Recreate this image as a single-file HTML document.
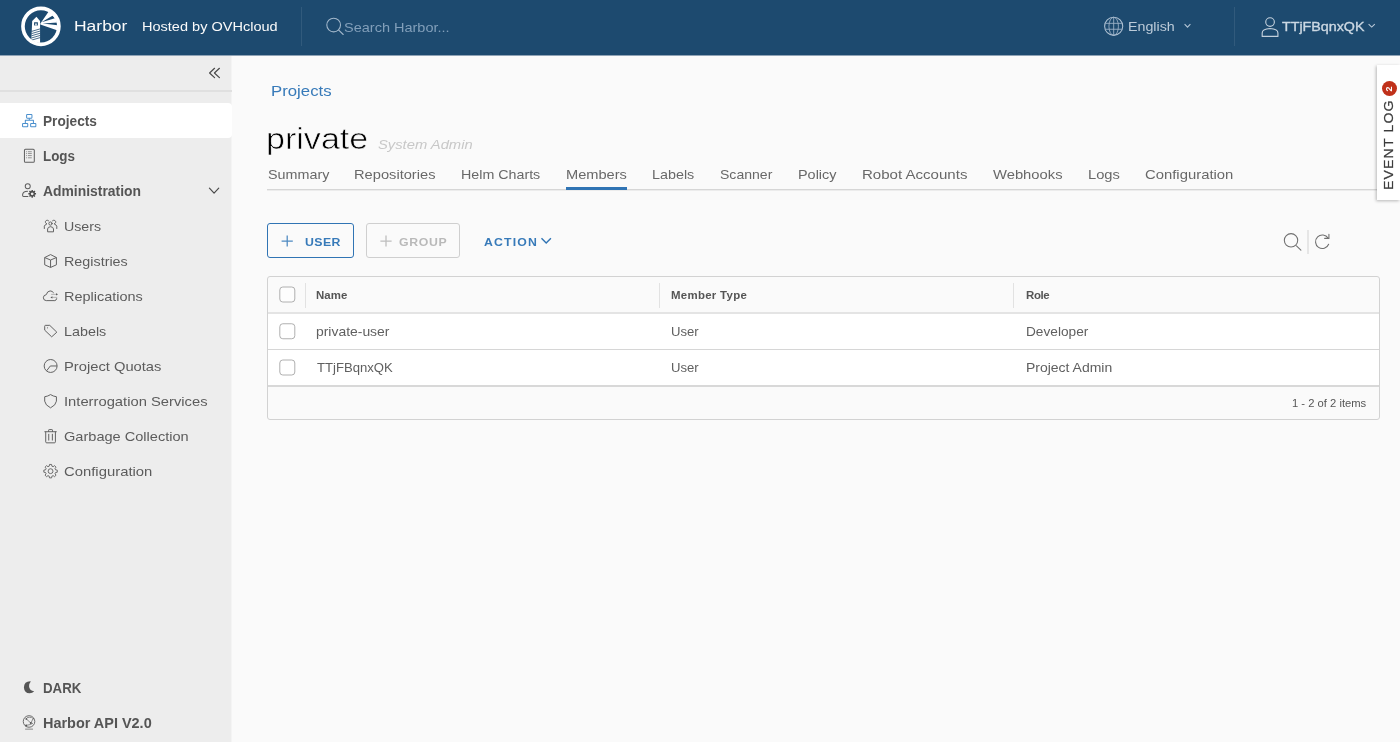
<!DOCTYPE html>
<html lang="en">
<head>
<meta charset="utf-8">
<title>Harbor - private - Members</title>
<style>
*{box-sizing:border-box;margin:0;padding:0}
html,body{width:1400px;height:742px;overflow:hidden;background:#fafafa}
body{position:relative;font-family:"Liberation Sans",sans-serif;color:#565656}
.t{position:absolute;white-space:nowrap;line-height:1;transform-origin:0 0;font-family:"Liberation Sans",sans-serif;text-decoration:none;font-weight:400}
ul{list-style:none}
svg{position:absolute;overflow:visible}
main,header,nav.side,aside.evt{will-change:transform}
main{position:absolute;left:0;top:0;width:1400px;height:742px;background:#fafafa;z-index:0}
nav.side{position:absolute;left:0;top:0;width:232px;height:742px;background:#ededed;border-right:1px solid #f4f4f4;z-index:1}
header{position:absolute;left:0;top:0;width:1400px;height:56px;background:#1d4a6f;border-bottom:1px solid #8fa3b6;z-index:2}
.hdiv{position:absolute;top:7px;width:1px;height:39px;background:#315a7c}
.navline{position:absolute;left:0;top:90px;width:232px;height:2px;background:#e0e0e0}
.navactive{position:absolute;left:0;top:103px;width:232px;height:35px;background:#ffffff;border-radius:0 4px 4px 0}
.tabline{position:absolute;left:267px;top:189px;width:1112px;height:2px;background:#d6d6d6;border-bottom:1px solid #ececec}
.tabactive{position:absolute;left:566px;top:187px;width:61px;height:3px;background:#3074b4}
.btn{position:absolute;top:223px;height:35px;border:1px solid #3074b4;border-radius:3px;background:transparent;padding:0;margin:0;overflow:visible}
.btn.link{border-color:transparent}
.btn.dis{border-color:#cfcfcf}
.grid{position:absolute;left:267px;top:276px;width:1113px;height:144px;border:1px solid #d2d2d2;border-radius:3px;background:#fafafa}
.row{position:absolute;left:268px;width:1111px;background:#ffffff}
.hline{position:absolute;left:268px;width:1111px;height:1px;background:#d4d4d4}
.colsep{position:absolute;top:283px;width:1px;height:25px;background:#e2e2e2}
.tsep{position:absolute;left:1307px;top:230px;width:2px;height:24px;background:#e6e6e6}
aside.evt{position:absolute;left:1377px;top:65px;width:23px;height:135px;background:#ffffff;box-shadow:-1px 1px 3px rgba(0,0,0,.27);z-index:3}
aside.evt .rot{position:absolute;left:0;top:135px;width:135px;height:24px;transform-origin:0 0;transform:rotate(-90deg)}
aside.evt .badge{position:absolute;left:103.5px;top:5px;width:15px;height:15px;border-radius:50%;background:#c0311a;color:#fff;font-size:9px;font-weight:700;line-height:15px;text-align:center}
</style>
</head>
<body>

<header>
  <svg style="left:14px;top:0;width:54px;height:54px" viewBox="0 0 742 742">
    <defs><clipPath id="lc"><circle cx="370" cy="362" r="228"/></clipPath></defs>
    <g clip-path="url(#lc)">
      <polygon points="362,322 482,150 760,80 760,480 590,416 362,338" fill="#fff"/>
      <polygon points="378,305 528,215 562,252" fill="#1d4a6f"/>
      <polygon points="395,323 600,308 600,347" fill="#1d4a6f"/>
      <polygon points="308,230 358,288 358,600 236,600 250,288" fill="#fff"/>
      <rect x="276" y="306" width="52" height="44" fill="#1d4a6f"/>
      <rect x="292" y="322" width="20" height="28" fill="#fff"/>
      <g stroke="#1d4a6f" stroke-width="11">
        <line x1="240" y1="432" x2="362" y2="396"/>
        <line x1="240" y1="462" x2="362" y2="426"/>
        <line x1="240" y1="492" x2="362" y2="456"/>
        <line x1="240" y1="522" x2="362" y2="486"/>
        <line x1="240" y1="552" x2="362" y2="516"/>
      </g>
    </g>
    <circle cx="370" cy="362" r="247" fill="none" stroke="#fff" stroke-width="50"/>
  </svg>
  <span class="t" style="left:74.26px;top:18px;font-size:15.4px;color:#fafafa;transform:scaleX(1.135);">Harbor</span>
  <span class="t" style="left:141.99px;top:21px;font-size:12.8px;color:#fafafa;transform:scaleX(1.135);">Hosted by OVHcloud</span>
  <div class="hdiv" style="left:301px"></div>
  <svg style="left:315px;top:7px;width:40px;height:40px" viewBox="0 0 742 742" fill="none" stroke="#a3b8cb" stroke-width="20" stroke-linecap="round">
    <circle cx="346" cy="335" r="127"/><line x1="440" y1="428" x2="524" y2="510"/>
  </svg>
  <span class="t" style="left:344.09px;top:21px;font-size:13.3px;color:#829fba;transform:scaleX(1.091);">Search Harbor...</span>
  <svg style="left:1094px;top:7px;width:40px;height:40px" viewBox="0 0 742 742" fill="none" stroke="#b0c2d3" stroke-width="20">
    <circle cx="365" cy="358" r="168"/>
    <g stroke-width="16" stroke="#9fb5c9">
    <ellipse cx="365" cy="358" rx="88" ry="168"/>
    <line x1="365" y1="190" x2="365" y2="526"/>
    <line x1="212" y1="303" x2="518" y2="303"/>
    <line x1="212" y1="413" x2="518" y2="413"/>
    </g>
  </svg>
  <span class="t" style="left:1128.12px;top:20px;font-size:13.4px;color:#bccbd9;transform:scaleX(1.064);">English</span>
  <svg style="left:1183px;top:21px;width:9px;height:9px" viewBox="0 0 9 9" fill="none" stroke="#b4c6d6" stroke-width="1.1"><polyline points="1.6,3.2 4.5,6.1 7.4,3.2"/></svg>
  <div class="hdiv" style="left:1234px"></div>
  <svg style="left:1250px;top:7px;width:40px;height:40px" viewBox="0 0 742 742" fill="none" stroke="#c3d0dc" stroke-width="21" stroke-linejoin="round">
    <circle cx="372" cy="280" r="80"/>
    <path d="M226 545 L226 482 Q226 405 372 398 Q518 405 518 482 L518 545 Z"/>
  </svg>
  <span class="t" style="left:1282.17px;top:20px;font-size:13.3px;color:#ccd8e3;transform:scaleX(1.073);-webkit-text-stroke:0.35px #ccd8e3;">TTjFBqnxQK</span>
  <svg style="left:1367px;top:21px;width:9px;height:9px" viewBox="0 0 9 9" fill="none" stroke="#b9c9d8" stroke-width="1.1"><polyline points="1.6,3.2 4.7,6.1 7.8,3.2"/></svg>
</header>

<nav class="side">
  <svg style="left:199px;top:58px;width:30px;height:30px" viewBox="0 0 742 742" fill="none" stroke="#4a4a4a" stroke-width="30" stroke-linecap="round" stroke-linejoin="round">
    <polyline points="385,255 262,370 385,485"/><polyline points="505,255 382,370 505,485"/>
  </svg>
  <div class="navline"></div>
  <ul>
    <li><div class="navactive"></div>
      <svg style="left:14px;top:105px;width:30px;height:30px" viewBox="0 0 742 742" fill="none" stroke="#4a8fcd" stroke-width="25" stroke-linejoin="round">
        <rect x="312" y="237" width="132" height="88" rx="14"/>
        <path d="M378 325 V380 M280 445 V380 H480 V445"/>
        <rect x="212" y="457" width="128" height="78" rx="12"/>
        <rect x="412" y="457" width="128" height="78" rx="12"/>
      </svg>
      <span class="t" style="left:42.7px;top:114px;font-size:14px;color:#555555;transform:scaleX(0.977);font-weight:700;">Projects</span></li>
    <li>
      <svg style="left:14px;top:140px;width:30px;height:30px" viewBox="0 0 742 742" fill="none" stroke="#5e5e5e" stroke-width="25">
        <rect x="258" y="228" width="244" height="325" rx="26"/>
        <g stroke="#8a8a8a" stroke-width="22"><path d="M300 290 H322 M345 290 H440 M300 335 H322 M345 335 H440 M300 385 H322 M345 385 H440 M300 440 H322 M345 440 H440"/></g>
      </svg>
      <span class="t" style="left:42.7px;top:149px;font-size:14px;color:#555555;transform:scaleX(0.956);font-weight:700;">Logs</span></li>
    <li>
      <svg style="left:14px;top:175px;width:30px;height:30px" viewBox="0 0 742 742" fill="none" stroke="#5e5e5e" stroke-width="25" stroke-linecap="round">
        <circle cx="340" cy="280" r="62"/>
        <path d="M345 530 H235 Q213 530 213 508 V485 Q220 405 335 400"/>
        <g stroke="none" fill="#4a4a4a"><path fill-rule="evenodd" d="M431 398 L433 370 L467 370 L469 398 L484 404 L505 386 L529 410 L511 431 L517 446 L545 448 L545 482 L517 484 L511 499 L529 520 L505 544 L484 526 L469 532 L467 560 L433 560 L431 532 L416 526 L395 544 L371 520 L389 499 L383 484 L355 482 L355 448 L383 446 L389 431 L371 410 L395 386 L416 404 Z M450 431 A34 34 0 1 0 450.1 431 Z"/></g>
      </svg>
      <span class="t" style="left:42.97px;top:184px;font-size:14px;color:#555555;transform:scaleX(0.992);font-weight:700;">Administration</span>
      <svg style="left:199px;top:176px;width:30px;height:30px" viewBox="0 0 742 742" fill="none" stroke="#4a4a4a" stroke-width="30" stroke-linecap="round" stroke-linejoin="round"><polyline points="258,300 373,422 488,300"/></svg>
      <ul>
        <li>
          <svg style="left:36px;top:210px;width:30px;height:30px" viewBox="0 0 742 742" fill="none" stroke="#5e5e5e" stroke-width="24" stroke-linecap="round" stroke-linejoin="round">
            <circle cx="358" cy="335" r="40"/>
            <path d="M287 530 V470 Q290 420 360 412 Q430 420 433 470 V530 Z"/>
            <path d="M310 265 Q285 245 255 258 Q225 275 235 312 Q245 335 262 342 M206 458 V400 Q215 370 262 345"/>
            <path d="M410 265 Q435 245 465 258 Q495 275 485 312 Q475 335 458 342 M514 458 V400 Q505 370 458 345"/>
          </svg>
          <span class="t" style="left:64.08px;top:220px;font-size:13.5px;color:#5c5c5c;transform:scaleX(1.053);">Users</span></li>
        <li>
          <svg style="left:36px;top:245px;width:30px;height:30px" viewBox="0 0 742 742" fill="none" stroke="#5e5e5e" stroke-width="24" stroke-linejoin="round">
            <path d="M360 237 L505 310 V490 L360 555 L215 490 V310 Z"/>
            <path d="M215 310 L360 372 L505 310 M360 372 V555"/>
          </svg>
          <span class="t" style="left:64px;top:255px;font-size:13.5px;color:#5c5c5c;transform:scaleX(1.062);">Registries</span></li>
        <li>
          <svg style="left:36px;top:280px;width:30px;height:30px" viewBox="0 0 742 742" fill="none" stroke="#5e5e5e" stroke-width="24" stroke-linecap="round" stroke-linejoin="round">
            <path d="M432 312 Q400 270 350 270 Q275 275 255 362 Q182 372 182 440 Q185 508 255 510 H465 Q505 505 512 462"/>
            <path d="M385 355 H500 M400 430 H515" stroke-width="18" stroke="#9a9a9a"/>
            <path d="M495 325 L545 355 L495 385 Z M405 400 L355 430 L405 460 Z" fill="#5a5a5a" stroke="none"/>
          </svg>
          <span class="t" style="left:63.99px;top:290px;font-size:13.5px;color:#5c5c5c;transform:scaleX(1.071);">Replications</span></li>
        <li>
          <svg style="left:36px;top:315px;width:30px;height:30px" viewBox="0 0 742 742" fill="none" stroke="#5e5e5e" stroke-width="24" stroke-linejoin="round">
            <path d="M215 278 Q215 256 237 256 H340 L515 425 L388 540 L215 375 Z"/>
            <circle cx="285" cy="318" r="14" fill="#6a6a6a" stroke="none"/>
          </svg>
          <span class="t" style="left:64px;top:325px;font-size:13.5px;color:#5c5c5c;transform:scaleX(1.062);">Labels</span></li>
        <li>
          <svg style="left:36px;top:350px;width:30px;height:30px" viewBox="0 0 742 742" fill="none" stroke="#5e5e5e" stroke-width="24" stroke-linejoin="round">
            <circle cx="362" cy="395" r="160"/>
            <path d="M262 515 L355 395 H520"/>
          </svg>
          <span class="t" style="left:63.97px;top:360px;font-size:13.5px;color:#5c5c5c;transform:scaleX(1.091);">Project Quotas</span></li>
        <li>
          <svg style="left:36px;top:385px;width:30px;height:30px" viewBox="0 0 742 742" fill="none" stroke="#5e5e5e" stroke-width="24" stroke-linejoin="round">
            <path d="M360 237 Q425 280 505 290 V400 Q492 500 360 565 Q228 500 215 400 V290 Q295 280 360 237 Z"/>
          </svg>
          <span class="t" style="left:63.82px;top:395px;font-size:13.5px;color:#5c5c5c;transform:scaleX(1.093);">Interrogation Services</span></li>
        <li>
          <svg style="left:36px;top:420px;width:30px;height:30px" viewBox="0 0 742 742" fill="none" stroke="#5e5e5e" stroke-width="24" stroke-linecap="round" stroke-linejoin="round">
            <path d="M218 290 H502 M312 285 V252 Q312 237 327 237 H393 Q408 237 408 252 V285"/>
            <path d="M240 295 V540 Q240 565 265 565 H455 Q480 565 480 540 V295"/>
            <path d="M315 352 V498 M405 352 V498"/>
          </svg>
          <span class="t" style="left:64.44px;top:430px;font-size:13.5px;color:#5c5c5c;transform:scaleX(1.079);">Garbage Collection</span></li>
        <li>
          <svg style="left:36px;top:455px;width:30px;height:30px" viewBox="0 0 742 742" fill="none" stroke="#5e5e5e" stroke-width="22" stroke-linejoin="round">
            <circle cx="360" cy="400" r="60"/>
            <path d="M327 276 L334 234 L386 234 L393 276 L424 289 L459 264 L496 301 L471 336 L484 367 L526 374 L526 426 L484 433 L471 464 L496 499 L459 536 L424 511 L393 524 L386 566 L334 566 L327 524 L296 511 L261 536 L224 499 L249 464 L236 433 L194 426 L194 374 L236 367 L249 336 L224 301 L261 264 L296 289 Z"/>
          </svg>
          <span class="t" style="left:64.41px;top:465px;font-size:13.5px;color:#5c5c5c;transform:scaleX(1.1);">Configuration</span></li>
      </ul>
    </li>
  </ul>
  <svg style="left:14px;top:672px;width:30px;height:30px" viewBox="0 0 742 742"><path d="M415 232 Q250 225 245 385 Q255 530 390 528 Q455 525 500 478 Q380 470 372 355 Q372 280 415 232 Z" fill="#555"/></svg>
  <span class="t" style="left:42.95px;top:681px;font-size:14px;color:#555555;transform:scaleX(0.947);font-weight:700;">DARK</span>
  <svg style="left:14px;top:707px;width:30px;height:30px" viewBox="0 0 742 742" fill="none" stroke="#666" stroke-width="24">
    <circle cx="372" cy="358" r="143"/>
    <path d="M275 548 H470" stroke="#999" stroke-width="30"/>
    <path d="M305 295 L415 395 M300 455 Q420 440 470 400 M320 265 Q380 245 440 262 M470 290 L420 395" stroke-width="18"/>
    <g fill="#555" stroke="none"><circle cx="305" cy="295" r="22"/><circle cx="415" cy="395" r="24"/><circle cx="300" cy="458" r="24"/><circle cx="475" cy="290" r="16"/></g>
  </svg>
  <span class="t" style="left:42.95px;top:716px;font-size:14px;color:#555555;transform:scaleX(1.032);font-weight:700;">Harbor API V2.0</span>
</nav>

<main>
  <span class="t" style="left:271.32px;top:83px;font-size:15.3px;color:#377ab9;transform:scaleX(1.096);">Projects</span>
  <h1><span class="t" style="left:266.45px;top:124px;font-size:30px;color:#000000;transform:scaleX(1.136);-webkit-text-stroke:0.6px #fafafa;">private</span></h1>
  <span class="t" style="left:378.44px;top:138px;font-size:13.5px;color:#c8c8c8;transform:scaleX(1.094);font-style:italic;">System Admin</span>
  <ul class="tabs">
    <li><span class="t" style="left:267.61px;top:168px;font-size:13.5px;color:#686868;transform:scaleX(1.062);">Summary</span></li><li><span class="t" style="left:354.48px;top:168px;font-size:13.5px;color:#686868;transform:scaleX(1.086);">Repositories</span></li><li><span class="t" style="left:461.01px;top:168px;font-size:13.5px;color:#686868;transform:scaleX(1.056);">Helm Charts</span></li><li><span class="t" style="left:565.98px;top:168px;font-size:13.5px;color:#686868;transform:scaleX(1.083);">Members</span></li><li><span class="t" style="left:652px;top:168px;font-size:13.5px;color:#686868;transform:scaleX(1.062);">Labels</span></li><li><span class="t" style="left:719.61px;top:168px;font-size:13.5px;color:#686868;transform:scaleX(1.041);">Scanner</span></li><li><span class="t" style="left:797.5px;top:168px;font-size:13.5px;color:#686868;transform:scaleX(1.068);">Policy</span></li><li><span class="t" style="left:861.95px;top:168px;font-size:13.5px;color:#686868;transform:scaleX(1.115);">Robot Accounts</span></li><li><span class="t" style="left:993.45px;top:168px;font-size:13.5px;color:#686868;transform:scaleX(1.094);">Webhooks</span></li><li><span class="t" style="left:1087.97px;top:168px;font-size:13.5px;color:#686868;transform:scaleX(1.09);">Logs</span></li><li><span class="t" style="left:1145.41px;top:168px;font-size:13.5px;color:#686868;transform:scaleX(1.1);">Configuration</span></li>
  </ul>
  <div class="tabline"></div>
  <div class="tabactive"></div>

  <button class="btn" style="left:267px;width:87px">
    <svg style="left:13px;top:11px;width:12px;height:12px" viewBox="0 0 12 12" stroke="#4d89c1" stroke-width="1.25"><path d="M6.2 0.4 V11.6 M0.6 6 H11.8"/></svg>
    <span class="t" style="left:36.96px;top:12px;font-size:11.6px;color:#377ab9;letter-spacing:0.4px;transform:scaleX(1.06);font-weight:700;">USER</span>
  </button>
  <button class="btn dis" style="left:366px;width:94px" disabled>
    <svg style="left:13px;top:11px;width:12px;height:12px" viewBox="0 0 12 12" stroke="#bdbdbd" stroke-width="1.25"><path d="M6 0.4 V11.6 M0.4 6 H11.6"/></svg>
    <span class="t" style="left:32.12px;top:12px;font-size:11.6px;color:#b9b9b9;letter-spacing:0.62px;transform:scaleX(1.06);font-weight:700;">GROUP</span>
  </button>
  <button class="btn link" style="left:472px;width:92px">
    <span class="t" style="left:11.2px;top:12px;font-size:11.6px;color:#377ab9;letter-spacing:1.08px;transform:scaleX(1.06);font-weight:700;">ACTION</span>
    <svg style="left:67px;top:11px;width:13px;height:12px" viewBox="0 0 13 12" fill="none" stroke="#3074b4" stroke-width="1.4"><polyline points="1.5,3.3 6.2,8.1 10.9,3.3"/></svg>
  </button>

  <svg style="left:1275px;top:221px;width:70px;height:40px" viewBox="0 0 1298 742" fill="none" stroke="#707070" stroke-width="20" stroke-linecap="round">
    <circle cx="297" cy="358" r="124"/><line x1="398" y1="462" x2="480" y2="542"/>
    <path d="M995 432 A126 126 0 1 1 985 318"/>
    <path d="M1000 248 V322 H920" stroke-linejoin="miter"/>
  </svg>
  <div class="tsep"></div>

  <div class="grid"></div>
  <div class="row" style="top:314px;height:35px"></div>
  <div class="row" style="top:350px;height:36px"></div>
  <div class="hline" style="top:312px;height:2px;background:#e4e4e4"></div>
  <div class="hline" style="top:349px;background:#d6d6d6"></div>
  <div class="hline" style="top:385px;height:2px;background:#d8d8d8"></div>
  <div class="colsep" style="left:305px"></div>
  <div class="colsep" style="left:659px"></div>
  <div class="colsep" style="left:1013px"></div>
  <svg class="cb" style="left:278px;top:285px;width:19px;height:19px" viewBox="0 0 19 19"><rect x="1.8" y="2" width="15" height="15" rx="3" fill="#fdfdfd" stroke="#b0b0b0"/></svg>
  <svg class="cb" style="left:278px;top:321px;width:19px;height:19px" viewBox="0 0 19 19"><rect x="1.8" y="2.75" width="15" height="15" rx="3" fill="#ffffff" stroke="#b0b0b0"/></svg>
  <svg class="cb" style="left:278px;top:358px;width:19px;height:19px" viewBox="0 0 19 19"><rect x="1.8" y="2" width="15" height="15" rx="3" fill="#ffffff" stroke="#b0b0b0"/></svg>
  <table>
    <thead><tr><th><span class="t" style="left:316.44px;top:290px;font-size:11px;color:#555555;letter-spacing:0.05px;transform:scaleX(1.04);font-weight:700;">Name</span></th><th><span class="t" style="left:671.44px;top:290px;font-size:11px;color:#555555;letter-spacing:0.28px;transform:scaleX(1.04);font-weight:700;">Member Type</span></th><th><span class="t" style="left:1025.94px;top:290px;font-size:11px;color:#555555;letter-spacing:-0.36px;transform:scaleX(1.04);font-weight:700;">Role</span></th></tr></thead>
    <tbody>
      <tr><td><span class="t" style="left:316.2px;top:325px;font-size:13px;color:#606060;transform:scaleX(1.07);">private-user</span></td><td><span class="t" style="left:671.19px;top:325px;font-size:13px;color:#606060;transform:scaleX(1.008);">User</span></td><td><span class="t" style="left:1025.57px;top:325px;font-size:13px;color:#606060;transform:scaleX(1.051);">Developer</span></td></tr>
      <tr><td><span class="t" style="left:317.19px;top:361px;font-size:13px;color:#606060;transform:scaleX(1.008);">TTjFBqnxQK</span></td><td><span class="t" style="left:671.19px;top:361px;font-size:13px;color:#606060;transform:scaleX(1.008);">User</span></td><td><span class="t" style="left:1025.54px;top:361px;font-size:13px;color:#606060;transform:scaleX(1.075);">Project Admin</span></td></tr>
    </tbody>
  </table>
  <span class="t" style="left:1292.43px;top:398px;font-size:11px;color:#565656;transform:scaleX(1.02);">1 - 2 of 2 items</span>
</main>

<aside class="evt">
  <div class="rot">
    <span class="t" style="left:9.7px;top:5.4px;font-size:13.3px;letter-spacing:1.07px;transform:scaleX(1.06);color:#3c3c3c;-webkit-text-stroke:0.25px #3c3c3c">EVENT LOG</span>
    <span class="badge">2</span>
  </div>
</aside>

</body>
</html>
